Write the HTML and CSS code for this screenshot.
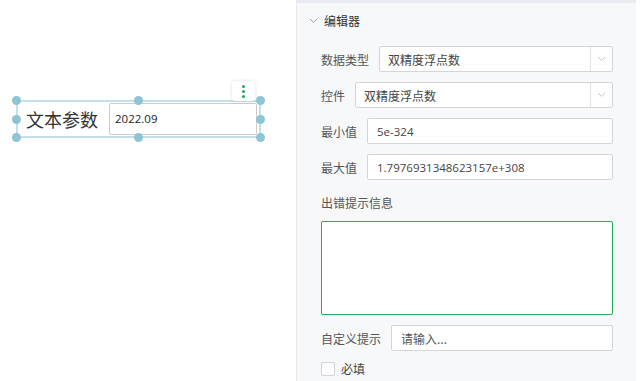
FILE: index.html
```html
<!DOCTYPE html>
<html lang="zh-CN">
<head>
	<meta charset="UTF-8">
	<title>编辑器</title>
	<link rel="stylesheet" href="styles.css">
</head>
<body>
	<section class="page">
		<section class="canvas">
			<div class="widget">
				<span class="w_label">文本参数</span>
				<div class="w_input">2022.09</div>
				<i class="dot tl"></i><i class="dot tc"></i><i class="dot tr"></i>
				<i class="dot ml"></i><i class="dot mr"></i>
				<i class="dot bl"></i><i class="dot bc"></i><i class="dot br"></i>
				<div class="more"><b></b><b></b><b></b></div>
			</div>
		</section>
		<section class="panel">
			<div class="head">
				<svg width="9" height="6" viewBox="0 0 9 6"><path d="M1 1l3.5 3.5L8 1" fill="none" stroke="#9aa0a8" stroke-width="1"/></svg>
				<span>编辑器</span>
			</div>
			<div class="rows">
				<div class="row">
					<label>数据类型</label>
					<div class="select"><span>双精度浮点数</span><em><svg width="9" height="6" viewBox="0 0 9 6"><path d="M1 1l3.5 3.5L8 1" fill="none" stroke="#c4c8cd" stroke-width="1"/></svg></em></div>
				</div>
				<div class="row">
					<label>控件</label>
					<div class="select"><span>双精度浮点数</span><em><svg width="9" height="6" viewBox="0 0 9 6"><path d="M1 1l3.5 3.5L8 1" fill="none" stroke="#c4c8cd" stroke-width="1"/></svg></em></div>
				</div>
				<div class="row">
					<label>最小值</label>
					<div class="input">5e-324</div>
				</div>
				<div class="row">
					<label>最大值</label>
					<div class="input">1.7976931348623157e+308</div>
				</div>
			</div>
			<div class="title">出错提示信息</div>
			<div class="area"></div>
			<div class="row custom">
				<label>自定义提示</label>
				<div class="input holder">请输入...</div>
			</div>
			<div class="check">
				<i></i><span>必填</span>
			</div>
		</section>
	</section>
</body>
</html>
```

FILE: styles.css
```css
*{margin:0;padding:0;box-sizing:border-box}
body{
	font-family: "Open Sans", "Noto Sans CJK SC", sans-serif;
	font-size: 12px;
	color: #333;
	background: #fff;
}
.page{
	display: flex;
	width: 642px;
	height: 381px;
	overflow: hidden;
}
.canvas{
	position: relative;
	width: 296px;
	height: 100%;
}
.widget{
	position: absolute;
	left: 16px;
	top: 100px;
	width: 245px;
	height: 38px;
	border: 2px solid #c3e0e8;
	display: flex;
	align-items: center;
	padding: 0 2px 0 8px;
}
.w_label{
	font-family: "Noto Sans CJK SC", sans-serif;
	font-size: 18px;
	color: #333;
	width: 83px;
}
.w_input{
	flex: 1;
	height: 32px;
	border: 1px solid #ccc;
	border-radius: 2px;
	line-height: 30px;
	padding-left: 5px;
	font-size: 11.5px;
	color: #222;
	background: #fff;
}
.dot{
	position: absolute;
	width: 9px;
	height: 9px;
	border-radius: 50%;
	background: #8fc4d4;
}
.tl,.ml,.bl{left:-6px}
.tc,.bc{left:116px}
.tr,.mr,.br{right:-6px}
.tl,.tc,.tr{top:-6px}
.ml,.mr{top:13px}
.bl,.bc,.br{bottom:-6px}
.more{
	position: absolute;
	left: 214px;
	top: -21px;
	width: 23px;
	height: 20px;
	background: #fff;
	border-radius: 3px;
	box-shadow: 0 0 4px rgba(0,0,0,0.12);
	display: flex;
	flex-direction: column;
	align-items: center;
	justify-content: center;
	gap: 2px;
}
.more b{
	width: 3px;
	height: 3px;
	border-radius: 50%;
	background: #1fa85a;
}
.panel{
	width: 340px;
	height: 100%;
	background: #f7f8fa;
	border-left: 1px solid #e6e8ec;
	border-top: 3px solid #e9ebf0;
	padding: 8px 23px 0 24px;
}
.head{
	display: flex;
	align-items: center;
	height: 20px;
	margin-left: -12px;
	color: #333;
}
.head svg{margin-right:6px}
.rows{
	display: flex;
	flex-direction: column;
	gap: 10px;
	margin-top: 15px;
}
.row{
	display: flex;
	align-items: center;
	height: 26px;
}
.row label{
	color: #555;
	margin-right: 10px;
	white-space: nowrap;
	font-family: "Noto Sans CJK SC", sans-serif;
}
.select,.input{
	flex: 1;
	height: 26px;
	background: #fff;
	border: 1px solid #d3d5d9;
	border-radius: 2px;
	display: flex;
	align-items: center;
	color: #444;
}
.select span{
	flex: 1;
	padding-left: 8px;
	font-family: "Noto Sans CJK SC", sans-serif;
}
.select em{
	width: 22px;
	height: 100%;
	border-left: 1px solid #e1e3e6;
	display: flex;
	align-items: center;
	justify-content: center;
}
.input{
	padding-left: 9px;
	font-size: 11.5px;
}
.title{
	margin-top: 13px;
	height: 20px;
	line-height: 20px;
	color: #555;
	font-family: "Noto Sans CJK SC", sans-serif;
}
.area{
	margin-top: 8px;
	height: 94px;
	background: #fff;
	border: 1px solid #22ad5c;
	border-radius: 2px;
}
.custom{margin-top:10px}
.holder{
	color: #555;
	font-size: 12px;
	font-family: "Noto Sans CJK SC", sans-serif;
	padding-left: 9px;
}
.check{
	display: flex;
	align-items: center;
	margin-top: 9px;
	color: #444;
	font-family: "Noto Sans CJK SC", sans-serif;
}
.check i{
	width: 14px;
	height: 14px;
	background: #fff;
	border: 1px solid #cfd2d6;
	border-radius: 2px;
	margin-right: 6px;
}
```
